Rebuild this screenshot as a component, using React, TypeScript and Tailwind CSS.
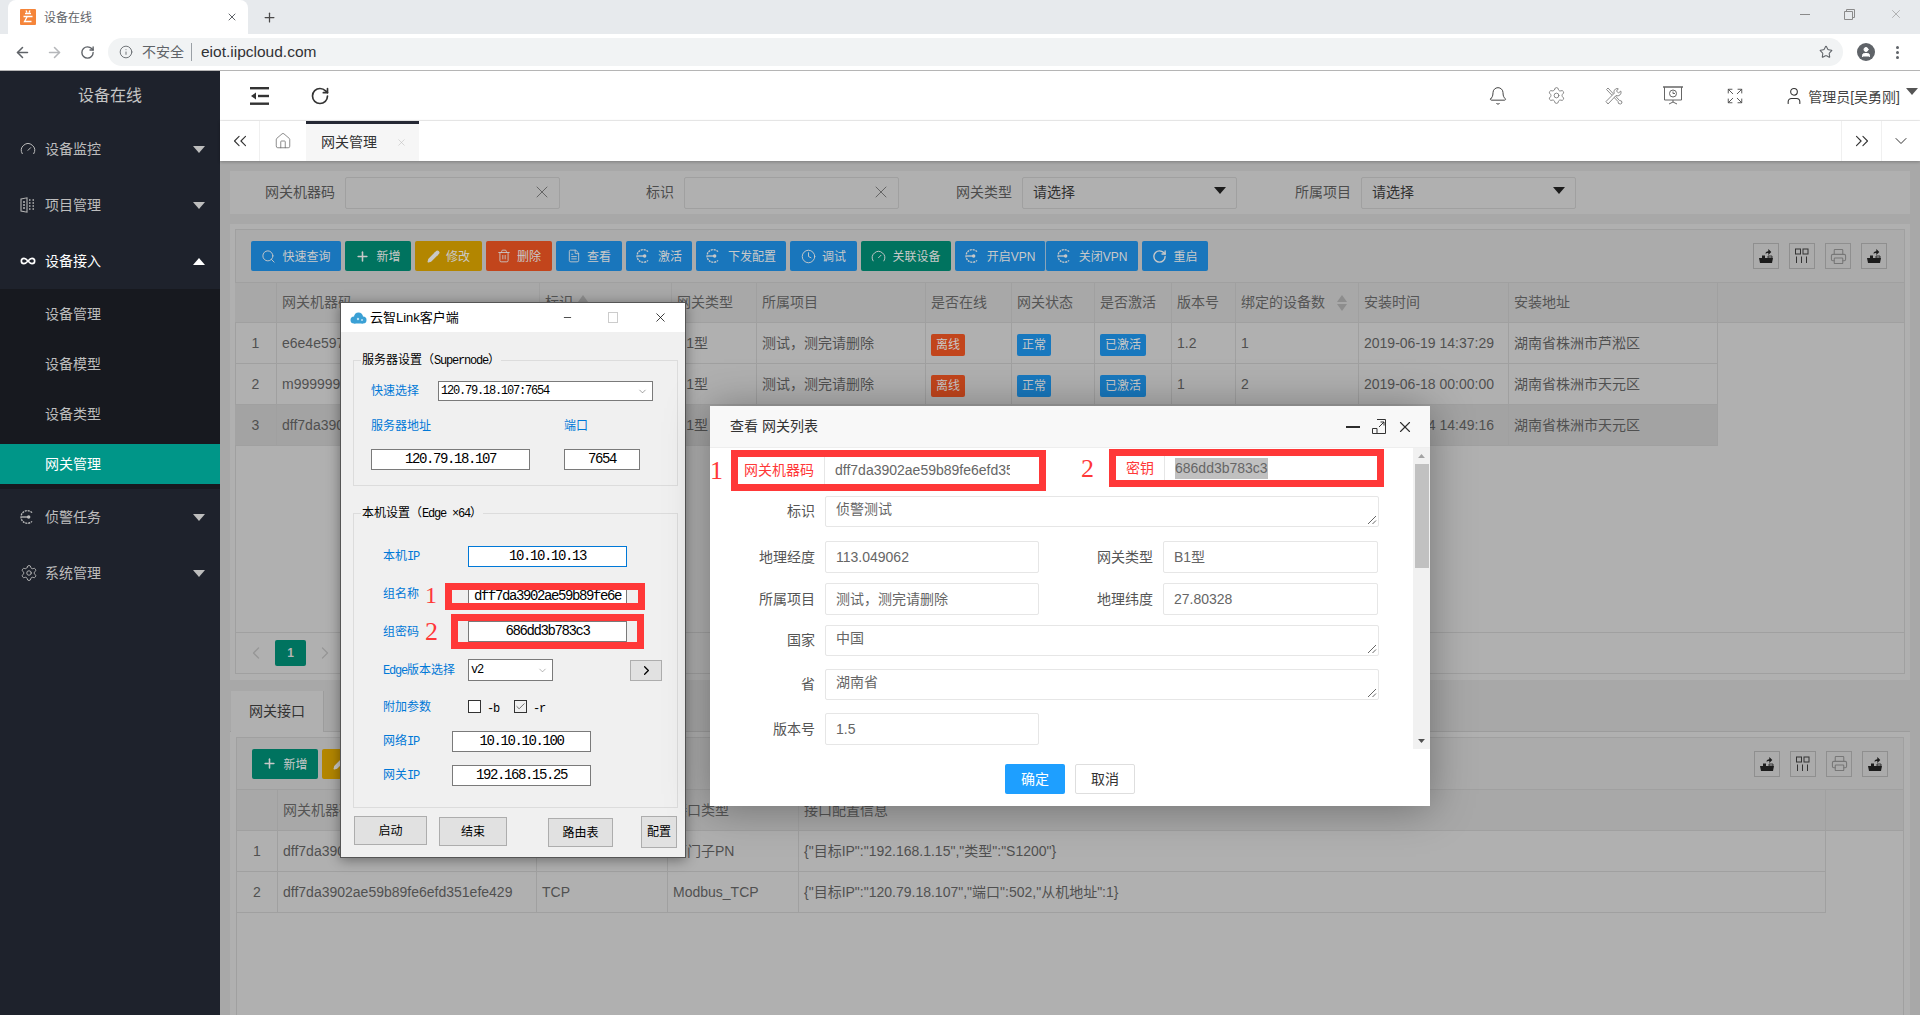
import React from "react";
import {
  ArrowLeft, ArrowRight, Bell, ChevronDown, ChevronLeft, ChevronRight, ChevronsLeft, ChevronsRight,
  Clock, Expand, FileText, Gauge, Home, Info, Infinity as InfinityIcon, Pencil, Plus, Printer, RotateCw, Search,
  Settings, Star, Trash2, User, X, Minus, Check,
} from "lucide-react";

const CDot = ({ s = 16, c = "currentColor" }: { s?: number; c?: string }) => (
  <svg width={s} height={s} viewBox="0 0 24 24" fill="none" stroke={c} strokeWidth="2" strokeDasharray="3 1.2">
    <path d="M18 5.5A9.5 9.5 0 1 0 18 18.5" />
    <path d="M2.5 12H12" strokeDasharray="none" />
    <circle cx="13" cy="12" r="1.6" fill={c} strokeDasharray="none" />
  </svg>
);
const Outdent = () => (
  <svg width="20" height="18" viewBox="0 0 20 18" fill="#333">
    <rect x="0" y="0" width="19" height="2.4" />
    <rect x="0" y="15.5" width="19" height="2.4" />
    <rect x="8" y="7.8" width="11" height="2.4" />
    <path d="M1 9l5-3.6v7.2z" />
  </svg>
);
const ShareTray = () => (
  <svg width="16" height="16" viewBox="0 0 16 16" fill="#1c1c1c">
    <path d="M1 10h14l-1 5H2z" />
    <path d="M4 10V7.5h3V10zM7.5 5.8c0-1.6 1-2.6 2.8-2.6V1l3 3-3 3V5c-1.3 0-2 .2-2.8.8z" />
    <path d="M10 8h4v2h-4z" fill="none" stroke="#1c1c1c" strokeWidth=".8" />
  </svg>
);
const ColIcon = () => (
  <svg width="16" height="16" viewBox="0 0 16 16" fill="none" stroke="#333" strokeWidth="1">
    <rect x="1.5" y="1" width="5" height="5" />
    <rect x="9" y="1" width="5" height="5" />
    <path d="M2.5 8.5V15M7.5 8.5V15M12.5 8.5V15" />
  </svg>
);
const Projector = () => (
  <svg width="20" height="20" viewBox="0 0 20 20" fill="none" stroke="#666" strokeWidth="1">
    <path d="M0 1h20" strokeWidth="1.5" />
    <path d="M1.5 1v13h17V1" />
    <circle cx="10" cy="7.5" r="3.5" />
    <path d="M10 5.5v2h2M10 14v2M10 16l-4 2M10 16l4 2" />
  </svg>
);
const Tools = () => (
  <svg width="18" height="18" viewBox="0 0 18 18" fill="none" stroke="#8a8a8a" strokeWidth="1">
    <path d="M1.5 2.5L3 1l11.5 12.5 2 .5.5 2-1.500 1-2-.5-.5-2z" />
    <path d="M12 1.500a3.500 3.500 0 0 0-2.800 4.800L1 14.500 3 17l8-8.500a3.500 3.500 0 0 0 4.800-4.500l-2.300 2-2-2 1.800-2.200z" fill="#fff" />
  </svg>
);
const ProjectIcon = () => (
  <svg width="15" height="16" viewBox="0 0 15 16" fill="none" stroke="#b5b5b5" strokeWidth="1.1">
    <path d="M1 2l6-1.200v14.400L1 14z" />
    <path d="M3 5h2M3 8h2M3 11h2M9 3h1.500M9 6h1.500M9 9h1.500M9 12h1.500M12.500 3H14M12.500 6H14M12.500 9H14M12.500 12H14" strokeWidth="1.5" />
  </svg>
);
const Cloud = () => (
  <svg width="17" height="12" viewBox="0 0 17 12" fill="#3aa0d5">
    <circle cx="4" cy="8" r="3.5" />
    <circle cx="8.5" cy="5" r="4.5" />
    <circle cx="13" cy="8" r="3.5" />
    <path d="M4 8h9v3.500H4z" />
    <circle cx="8" cy="7" r="1.2" fill="#bfe3f5" />
    <circle cx="12" cy="8" r="1" fill="#bfe3f5" />
  </svg>
);
const Favicon = () => (
  <svg width="16" height="16" viewBox="0 0 16 16">
    <rect width="16" height="16" rx="1" fill="#f5853a" />
    <path d="M5 4.500h6M3.500 7.500h9M7 8l-2.500 4.500h7M6 1.500l1 2M10 1.500l-1 2" stroke="#fff" strokeWidth="1.3" fill="none" />
  </svg>
);
const Caret = ({ up = false, cls = "" }: { up?: boolean; cls?: string }) => (
  <svg width="12" height="7" viewBox="0 0 12 7" className={cls} fill="currentColor">
    <path d={up ? "M6 0l6 7H0z" : "M0 0h12L6 7z"} />
  </svg>
);
const Sort = () => (
  <svg width="10" height="18" viewBox="0 0 10 18" fill="#8d8d8d">
    <path d="M5 1l5 7H0zM5 17l5-7H0z" />
  </svg>
);
const Resize = () => (
  <svg width="10" height="10" viewBox="0 0 10 10" className="absolute bottom-px right-px" stroke="#666" fill="none">
    <path d="M1 9l8-8M5.5 9L9 5.5" />
  </svg>
);

const SideItem = ({ icon, text, active = false, up = false }: { icon: React.ReactNode; text: string; active?: boolean; up?: boolean }) => (
  <div className={`flex h-[56px] items-center pl-[20px] pr-[15px] text-[14px] ${active ? "text-white" : "text-[#bdbdbd]"}`}>
    <span className="flex w-[25px] items-center">{icon}</span>
    <span className="flex-1">{text}</span>
    <Caret up={up} />
  </div>
);

const SubItem = ({ text, active = false }: { text: string; active?: boolean }) =>
  active ? (
    <div className="mt-[5px] flex h-[40px] items-center bg-[#009688] pl-[45px] text-[14px] text-white">{text}</div>
  ) : (
    <div className="flex h-[50px] items-center pl-[45px] text-[14px] text-[#bdbdbd]">{text}</div>
  );

const Btn = ({ w, bg, icon, text, flush = false }: { w: string; bg: string; icon: React.ReactNode; text: string; flush?: boolean }) => (
  <div className={`flex h-[30px] items-center justify-center gap-[6px] rounded-[2px] text-[12px] text-[#c9c9c9] ${w} ${bg} ${flush ? "-mr-[4px] border-r border-[#8aa5ba]" : ""}`}>
    {icon}
    <span className="pt-[2px]">{text}</span>
  </div>
);

const ToolIcons = () => (
  <div className="flex gap-[10px]">
    {[<ShareTray key="a" />, <ColIcon key="b" />, <Printer key="c" size={17} strokeWidth={1.5} color="#777" />, <ShareTray key="d" />].map((ic, i) => (
      <div key={i} className="flex h-[26px] w-[26px] items-center justify-center border border-[#8f8f8f]">{ic}</div>
    ))}
  </div>
);

const Badge = ({ text, cls }: { text: string; cls: string }) => (
  <span className={`mt-[3px] inline-flex h-[22px] items-center rounded-[2px] px-[5px] text-[12px] text-[#c9c9c9] ${cls}`}>{text}</span>
);

const cols1 = "grid w-[1483px] grid-cols-[42px_263px_132px_85px_169px_86px_83px_77px_64px_123px_150px_209px]";
const cols2 = "grid w-[1589px] grid-cols-[41px_259px_131px_131px_1027px]";
const cell = "flex items-center border-r border-[#a0a0a0] pl-[5px] overflow-hidden whitespace-nowrap";
const numCell = "flex items-center justify-center border-r border-[#a0a0a0]";

const off = <Badge text="离线" cls="bg-[#c2451c]" />;
const ok = <Badge text="正常" cls="bg-[#1878be]" />;
const act = <Badge text="已激活" cls="bg-[#1878be]" />;

const rows1 = [
  ["1", "e6e4e59702ae59b89fe6efd351efe4", "侦警测试", "B1型", "测试，测完请删除", off, ok, act, "1.2", "1", "2019-06-19 14:37:29", "湖南省株洲市芦淞区"],
  ["2", "m99999902ae59b89fe6efd351efe4", "侦警测试", "B1型", "测试，测完请删除", off, ok, act, "1", "2", "2019-06-18 00:00:00", "湖南省株洲市天元区"],
  ["3", "dff7da3902ae59b89fe6efd351efe4", "侦警测试", "B1型", "测试，测完请删除", off, ok, act, "1.5", "2", "2019-06-14 14:49:16", "湖南省株洲市天元区"],
];
const heads1: React.ReactNode[] = [
  "", "网关机器码",
  <span key="s" className="flex items-center gap-[5px]">标识 <Sort /></span>,
  "网关类型", "所属项目", "是否在线", "网关状态", "是否激活", "版本号",
  <span key="t" className="flex items-center gap-[12px]">绑定的设备数 <Sort /></span>,
  "安装时间", "安装地址",
];
const rows2 = [
  ["1", "dff7da3902ae59b89fe6efd351efe429", "TCP", "西门子PN", '{"目标IP":"192.168.1.15","类型":"S1200"}'],
  ["2", "dff7da3902ae59b89fe6efd351efe429", "TCP", "Modbus_TCP", '{"目标IP":"120.79.18.107","端口":502,"从机地址":1}'],
];

const Filter = ({ label, w, select = false }: { label: string; w: string; select?: boolean }) => (
  <div className={`flex items-center justify-end gap-[10px] ${w}`}>
    <span className="text-[14px] text-[#4c4c4c]">{label}</span>
    <div className={`flex h-[32px] w-[215px] items-center justify-between rounded-[2px] border border-[#a0a0a0] pl-[10px] text-[14px] text-[#303030] ${select ? "pr-[10px]" : "pr-[7px]"}`}>
      <span>{select ? "请选择" : ""}</span>
      {select ? <Caret cls="mb-[4px] text-[#1c1c1c]" /> : <X size={20} strokeWidth={1} color="#555" className="mb-[1px]" />}
    </div>
  </div>
);

const Win = "font-['Liberation_Mono','Noto_Sans_CJK_SC',monospace]";
const Mono12 = ({ children }: { children: React.ReactNode }) => (
  <span className={`${Win} text-[12px] tracking-[-1.2px]`}>{children}</span>
);
const Blue = ({ children, w }: { children: React.ReactNode; w: string }) => (
  <span className={`shrink-0 text-[12px] text-[#0078d7] ${w}`}>{children}</span>
);
const WInput = ({ value, w, cls = "border-[#7a7a7a]" }: { value: string; w: string; cls?: string }) => (
  <div className={`flex h-[21px] shrink-0 items-center justify-center overflow-hidden border bg-white text-[14px] tracking-[-1.4px] text-black ${Win} ${w} ${cls}`}>
    {value}
  </div>
);
const WBtn = ({ text, cls }: { text: string; cls: string }) => (
  <div className={`flex shrink-0 items-center justify-center border border-[#adadad] bg-[#e1e1e1] text-[12px] text-black ${cls}`}>{text}</div>
);
const Num = ({ n, cls }: { n: string; cls: string }) => (
  <span className={`font-['Liberation_Serif',serif] leading-none text-[#ff3838] ${cls}`}>{n}</span>
);
const WCheck = ({ on = false }: { on?: boolean }) => (
  <span className={`flex h-[13px] w-[13px] items-center justify-center border border-[#333] ${on ? "bg-[#f0f0f0]" : "bg-white"}`}>
    {on && <Check size={11} strokeWidth={1.5} color="#333" />}
  </span>
);

const ClientWindow = () => (
  <div className="absolute left-[340px] top-[302px] h-[556px] w-[346px] border border-[#555] bg-[#f0f0f0] shadow-[0_2px_12px_rgba(0,0,0,0.4)]">
    <div className="flex h-[29px] items-center bg-white pl-[9px] text-[13px] text-black">
      <Cloud />
      <span className="ml-[3px] flex-1">云智Link客户端</span>
      <Minus size={11} strokeWidth={1.5} className="mr-[35px]" color="#000" />
      <span className="mr-[35px] h-[11px] w-[10px] border border-[#ccc]" />
      <X size={15} strokeWidth={1.2} className="mr-[17px]" color="#000" />
    </div>

    <div className="relative ml-[12px] mt-[28px] h-[126px] w-[325px] border border-[#dcdcdc] pl-[17px] pt-[20px]">
      <div className="absolute -top-[10px] left-[7px] bg-[#f0f0f0] px-px text-[12px] text-black">
        服务器设置（<Mono12>Supernode</Mono12>）
      </div>
      <div className="flex items-center">
        <Blue w="w-[67px]">快速选择</Blue>
        <div className="flex h-[20px] w-[215px] items-center justify-between border border-[#7a7a7a] bg-white pl-[2px] pr-[4px] text-black">
          <Mono12>120.79.18.107:7654</Mono12>
          <ChevronDown size={11} strokeWidth={1.2} color="#555" />
        </div>
      </div>
      <div className="mt-[17px] flex h-[16px] items-center">
        <Blue w="w-[193px]">服务器地址</Blue>
        <Blue w="w-[40px]">端口</Blue>
      </div>
      <div className="mt-[15px] flex">
        <WInput value="120.79.18.107" w="w-[159px]" />
        <div className="w-[34px]" />
        <WInput value="7654" w="w-[76px]" />
      </div>
    </div>

    <div className="relative ml-[12px] mt-[27px] h-[295px] w-[325px] border border-[#dcdcdc] pl-[29px] pt-[32px]">
      <div className="absolute -top-[10px] left-[7px] bg-[#f0f0f0] px-px text-[12px] text-black">
        本机设置（<Mono12>Edge ×64</Mono12>）
      </div>
      <div className="flex items-center">
        <Blue w="w-[85px]">本机<Mono12>IP</Mono12></Blue>
        <WInput value="10.10.10.13" w="w-[159px]" cls="border-[#0078d7]" />
      </div>
      <div className="mt-[16px] flex h-[27px] items-start">
        <Blue w="w-[42px] mt-[2px]">组名称</Blue>
        <Num n="1" cls="w-[20px] text-[24px]" />
        <div className="h-[27px] w-[200px] shrink-0 border-[7px] border-[#ff3838] pl-[16px]">
          <div className="flex h-[13px] w-[159px] items-center justify-center overflow-hidden border-x border-[#7a7a7a] bg-white">
            <span className={`${Win} text-[14px] tracking-[-1.4px] text-black`}>dff7da3902ae59b89fe6e</span>
          </div>
        </div>
      </div>
      <div className="mt-[4px] flex h-[35px] items-center">
        <Blue w="w-[42px]">组密码</Blue>
        <Num n="2" cls="w-[26px] text-[26px]" />
        <div className="flex h-[35px] w-[193px] shrink-0 items-center border-[7px] border-[#ff3838] pl-[10px]">
          <WInput value="686dd3b783c3" w="w-[159px] h-[20px]" />
        </div>
      </div>
      <div className="mt-[10px] flex h-[22px] items-center">
        <Blue w="w-[85px]"><Mono12>Edge</Mono12>版本选择</Blue>
        <div className="flex h-[22px] w-[85px] items-center justify-between border border-[#7a7a7a] bg-white px-[2px] pr-[4px] text-black">
          <Mono12>v2</Mono12>
          <ChevronDown size={11} strokeWidth={1.2} color="#777" />
        </div>
        <div className="ml-[77px] flex h-[21px] w-[32px] items-center justify-center border border-[#adadad] bg-[#e1e1e1]">
          <ChevronRight size={15} strokeWidth={2} color="#000" />
        </div>
      </div>
      <div className="mt-[19px] flex h-[13px] items-center text-black">
        <Blue w="w-[85px]">附加参数</Blue>
        <WCheck />
        <span className="ml-[6px] w-[27px]"><Mono12>-b</Mono12></span>
        <WCheck on />
        <span className="ml-[6px]"><Mono12>-r</Mono12></span>
      </div>
      <div className="mt-[18px] flex items-center">
        <Blue w="w-[69px]">网络<Mono12>IP</Mono12></Blue>
        <WInput value="10.10.10.100" w="w-[139px]" />
      </div>
      <div className="mt-[13px] flex items-center">
        <Blue w="w-[69px]">网关<Mono12>IP</Mono12></Blue>
        <WInput value="192.168.15.25" w="w-[139px]" />
      </div>
    </div>

    <div className="mt-[8px] flex items-start">
      <WBtn text="启动" cls="ml-[13px] h-[29px] w-[73px]" />
      <WBtn text="结束" cls="ml-[12px] mt-px h-[29px] w-[68px]" />
      <WBtn text="路由表" cls="ml-[41px] mt-[2px] h-[29px] w-[65px]" />
      <WBtn text="配置" cls="ml-[28px] h-[32px] w-[36px]" />
    </div>
  </div>
);

const Lab = ({ children, w = "w-[105px]" }: { children: React.ReactNode; w?: string }) => (
  <span className={`shrink-0 text-right text-[14px] text-[#555] ${w}`}>{children}</span>
);
const MInput = ({ v, w }: { v: string; w: string }) => (
  <div className={`ml-[10px] flex h-[32px] items-center rounded-[2px] border border-[#e6e6e6] pl-[10px] text-[14px] text-[#666] ${w}`}>{v}</div>
);
const MArea = ({ v, cls }: { v: string; cls: string }) => (
  <div className={`flex items-center ${cls}`}>
    <Lab>{v === "侦警测试" ? "标识" : v === "中国" ? "国家" : "省"}</Lab>
    <div className="relative ml-[10px] h-[31px] w-[554px] rounded-[2px] border border-[#e6e6e6] pl-[10px] pt-[2px] text-[14px] text-[#666]">
      {v}
      <Resize />
    </div>
  </div>
);

const GatewayModal = () => (
  <div className="absolute left-[710px] top-[406px] flex h-[400px] w-[720px] flex-col bg-white shadow-[0_2px_40px_rgba(0,0,0,0.35)]">
    <div className="flex h-[42px] items-center border-b border-[#eeeeee] bg-[#f8f8f8] pl-[20px] pr-[16px] text-[14px] text-[#333]">
      <span className="flex-1">查看 网关列表</span>
      <span className="mr-[12px] h-[2px] w-[14px] bg-[#2d2d2d]" />
      <svg width="14" height="15" viewBox="0 0 14 15" fill="none" stroke="#333" className="mr-[10px]">
        <path d="M5 .5h8.500v14H5M.5 9.5h4.500v5H.5zM7 8l5-5M8.500 3H12v3.500" />
      </svg>
      <X size={18} strokeWidth={1.5} color="#2d2d2d" />
    </div>
    <div className="flex h-[301px] overflow-hidden">
      <div className="w-[703px]">
        <div className="flex h-[42px] items-start pt-[2px]">
          <Num n="1" cls="w-[21px] text-[26px] mt-[8px]" />
          <div className="flex h-[41px] w-[315px] shrink-0 items-center border-[7px] border-[#ff3838]">
            <span className="flex h-full w-[87px] items-center justify-end border-r border-[#e6e6e6] pr-[10px] text-[14px] text-[#ff3838]">网关机器码</span>
            <span className="w-[185px] overflow-hidden whitespace-nowrap pl-[10px] text-[14px] text-[#666]">dff7da3902ae59b89fe6efd351efe429</span>
          </div>
          <Num n="2" cls="ml-[35px] w-[28px] text-[26px] mt-[6px]" />
          <div className="-mt-[1px] flex h-[38px] w-[275px] shrink-0 items-center border-[7px] border-[#ff3838]">
            <span className="flex h-full w-[49px] items-center justify-end border-r border-[#e6e6e6] pr-[10px] text-[14px] text-[#ff3838]">密钥</span>
            <span className="ml-[10px] bg-[#c0c0c0] text-[14px] text-[#666]">686dd3b783c3</span>
          </div>
        </div>
        <MArea v="侦警测试" cls="mt-[6px]" />
        <div className="mt-[14px] flex items-center">
          <Lab>地理经度</Lab>
          <MInput v="113.049062" w="w-[214px]" />
          <Lab w="w-[114px]">网关类型</Lab>
          <MInput v="B1型" w="w-[215px]" />
        </div>
        <div className="mt-[10px] flex items-center">
          <Lab>所属项目</Lab>
          <MInput v="测试，测完请删除" w="w-[214px]" />
          <Lab w="w-[114px]">地理纬度</Lab>
          <MInput v="27.80328" w="w-[215px]" />
        </div>
        <MArea v="中国" cls="mt-[10px]" />
        <MArea v="湖南省" cls="mt-[13px]" />
        <div className="mt-[13px] flex items-center">
          <Lab>版本号</Lab>
          <MInput v="1.5" w="w-[214px]" />
        </div>
      </div>
      <div className="flex w-[17px] flex-col items-center bg-[#f1f1f1]">
        <Caret up cls="mt-[6px] h-[4px] w-[7px] text-[#a3a3a3]" />
        <div className="mt-[6px] h-[104px] w-[14px] bg-[#c1c1c1]" />
        <div className="flex-1" />
        <Caret cls="mb-[6px] h-[4px] w-[7px] text-[#505050]" />
      </div>
    </div>
    <div className="mt-[15px] flex justify-center gap-[10px]">
      <div className="flex h-[30px] w-[60px] items-center justify-center rounded-[2px] bg-[#1e9fff] text-[14px] text-white">确定</div>
      <div className="flex h-[30px] w-[60px] items-center justify-center rounded-[2px] border border-[#dedede] text-[14px] text-[#333]">取消</div>
    </div>
  </div>
);

export default function App() {
  return (
    <div className="relative flex h-[1015px] w-[1920px] flex-col overflow-hidden bg-white font-['Liberation_Sans','Noto_Sans_CJK_SC',sans-serif]">
      {/* browser tab strip */}
      <div className="flex h-[34px] items-end bg-[#e7eaed] pl-[8px]">
        <div className="flex h-[34px] w-[240px] items-center rounded-t-[8px] bg-white pl-[12px] pr-[10px]">
          <Favicon />
          <span className="ml-[8px] flex-1 pt-[2px] text-[12px] text-[#5f6368]">设备在线</span>
          <X size={12} strokeWidth={2} color="#5f6368" />
        </div>
        <Plus size={15} strokeWidth={2} color="#4a4a4a" className="mb-[9px] ml-[14px]" />
        <div className="flex-1" />
        <div className="mb-[13px] mr-[17px] flex items-center gap-[34px]">
          <span className="h-px w-[10px] bg-[#8a8a8a]" />
          <svg width="11" height="11" viewBox="0 0 11 11" fill="none" stroke="#8a8a8a"><path d="M.5 2.500h8v8h-8zM2.500 2.500v-2h8v8h-2" /></svg>
          <X size={14} strokeWidth={1} color="#8a8a8a" />
        </div>
      </div>
      {/* browser toolbar */}
      <div className="flex h-[37px] items-center border-b border-[#b5b5b5] bg-white py-[4px]">
        <ArrowLeft size={17} strokeWidth={2.2} color="#5f6368" className="ml-[14px]" />
        <ArrowRight size={17} strokeWidth={2.2} color="#b5b7ba" className="ml-[15px]" />
        <RotateCw size={15} strokeWidth={2.2} color="#5f6368" className="ml-[17px]" />
        <div className="ml-[13px] flex h-[28px] w-[1735px] items-center rounded-full bg-[#f1f3f4] pl-[11px] pr-[10px]">
          <Info size={14} strokeWidth={1.5} color="#5f6368" />
          <span className="ml-[9px] text-[14px] text-[#5f6368]">不安全</span>
          <span className="ml-[7px] h-[18px] w-px bg-[#9aa0a6]" />
          <span className="ml-[9px] flex-1 text-[15.5px] text-[#303134]">eiot.iipcloud.com</span>
          <Star size={14} strokeWidth={1.8} color="#5f6368" />
        </div>
        <span className="ml-[14px] flex h-[18px] w-[18px] items-center justify-center rounded-full bg-[#5f6368]">
          <User size={12} fill="#fff" color="#fff" />
        </span>
        <span className="ml-[21px] flex flex-col gap-[2px]">
          <i className="h-[3px] w-[3px] rounded-full bg-[#5f6368]" />
          <i className="h-[3px] w-[3px] rounded-full bg-[#5f6368]" />
          <i className="h-[3px] w-[3px] rounded-full bg-[#5f6368]" />
        </span>
      </div>

      <div className="flex min-h-0 flex-1">
        {/* sidebar */}
        <aside className="w-[220px] shrink-0 bg-[#1e222c]">
          <div className="flex h-[50px] items-center justify-center text-[16px] text-[#c4c4c4]">设备在线</div>
          <SideItem icon={<Gauge size={16} strokeWidth={1.5} />} text="设备监控" />
          <SideItem icon={<ProjectIcon />} text="项目管理" />
          <SideItem icon={<InfinityIcon size={16} strokeWidth={2.5} />} text="设备接入" active up />
          <div className="h-[200px] bg-[#17191f]">
            <SubItem text="设备管理" />
            <SubItem text="设备模型" />
            <SubItem text="设备类型" />
            <SubItem text="网关管理" active />
          </div>
          <SideItem icon={<CDot />} text="侦警任务" />
          <SideItem icon={<Settings size={18} strokeWidth={1.2} />} text="系统管理" />
        </aside>

        <main className="flex min-w-0 flex-1 flex-col">
          {/* header */}
          <div className="flex h-[50px] items-center border-b border-[#f0f0f0] bg-white">
            <span className="ml-[30px]"><Outdent /></span>
            <RotateCw size={20} strokeWidth={2} color="#333" className="ml-[40px]" />
            <div className="flex-1" />
            <Bell size={20} strokeWidth={1.2} color="#444" />
            <Settings size={19} strokeWidth={1.1} color="#777" className="ml-[39px]" />
            <span className="ml-[39px]"><Tools /></span>
            <span className="ml-[40px]"><Projector /></span>
            <Expand size={18} strokeWidth={1.3} color="#555" className="ml-[43px]" />
            <User size={20} strokeWidth={1.3} color="#333" className="ml-[40px]" />
            <span className="ml-[4px] mt-[4px] text-[14px] text-[#444]">管理员[吴勇刚]</span>
            <Caret cls="ml-[6px] mb-[8px] mr-[2px] text-[#555]" />
          </div>
          {/* tabs */}
          <div className="z-10 flex h-[40px] items-stretch bg-white shadow-[0_1px_3px_rgba(0,0,0,0.25)]">
            <div className="flex w-[40px] items-center justify-center border-r border-[#f0f0f0]">
              <ChevronsLeft size={22} strokeWidth={1.2} color="#333" />
            </div>
            <div className="flex w-[46px] items-center justify-center">
              <Home size={18} strokeWidth={1} color="#666" />
            </div>
            <div className="flex w-[113px] items-center border-t-[3px] border-[#252834] bg-[#f6f6f6] pl-[15px] text-[14px] text-[#333]">
              <span className="flex-1">网关管理</span>
              <X size={11} strokeWidth={1.2} color="#bbb" className="mr-[12px]" />
            </div>
            <div className="flex-1" />
            <div className="flex w-[40px] items-center justify-center border-l border-[#f0f0f0]">
              <ChevronsRight size={22} strokeWidth={1.2} color="#333" />
            </div>
            <div className="flex w-[39px] items-center justify-center border-l border-[#f0f0f0]">
              <ChevronDown size={20} strokeWidth={1.2} color="#333" />
            </div>
          </div>

          {/* dimmed content */}
          <div className="flex min-h-0 flex-1 flex-col bg-[#a8a8a8] pl-[10px] pr-[10px] pt-[10px]">
            <div className="flex h-[43px] shrink-0 items-center bg-[#b0b0b0]">
              <Filter label="网关机器码" w="w-[330px]" />
              <Filter label="标识" w="w-[339px]" />
              <Filter label="网关类型" w="w-[338px]" select />
              <Filter label="所属项目" w="w-[339px]" select />
            </div>

            <div className="mt-[10px] h-[456px] shrink-0 bg-[#b0b0b0] pb-[6px] pl-[5px] pr-[5px] pt-[5px]">
              <div className="flex h-full flex-col border border-[#a0a0a0]">
                <div className="flex h-[52px] shrink-0 items-center justify-between bg-[#ababab] pl-[15px] pr-[17px]">
                  <div className="flex gap-[4px]">
                    <Btn w="w-[90px]" bg="bg-[#1976bc]" icon={<Search size={15} strokeWidth={1.5} />} text="快速查询" />
                    <Btn w="w-[66px]" bg="bg-[#00735f]" icon={<Plus size={15} strokeWidth={2.5} />} text="新增" />
                    <Btn w="w-[67px]" bg="bg-[#b38600]" icon={<Pencil size={13} fill="currentColor" />} text="修改" />
                    <Btn w="w-[66px]" bg="bg-[#c2451c]" icon={<Trash2 size={14} strokeWidth={1.5} />} text="删除" />
                    <Btn w="w-[66px]" bg="bg-[#1976bc]" icon={<FileText size={14} strokeWidth={1.5} />} text="查看" />
                    <Btn w="w-[66px]" bg="bg-[#1976bc]" icon={<CDot />} text="激活" />
                    <Btn w="w-[90px]" bg="bg-[#1976bc]" icon={<CDot />} text="下发配置" />
                    <Btn w="w-[67px]" bg="bg-[#1976bc]" icon={<Clock size={15} strokeWidth={1.5} />} text="调试" />
                    <Btn w="w-[90px]" bg="bg-[#00735f]" icon={<Gauge size={15} strokeWidth={1.5} />} text="关联设备" />
                    <Btn w="w-[91px]" bg="bg-[#1976bc]" icon={<CDot />} text="开启VPN" flush />
                    <Btn w="w-[92px]" bg="bg-[#1976bc]" icon={<CDot />} text="关闭VPN" />
                    <Btn w="w-[66px]" bg="bg-[#1976bc]" icon={<RotateCw size={15} strokeWidth={2.2} />} text="重启" />
                  </div>
                  <ToolIcons />
                </div>
                <div className="-ml-px h-[41px] shrink-0 border-y border-[#a0a0a0] bg-[#a8a8a8]">
                  <div className={`${cols1} h-full text-[14px] text-[#555]`}>
                    {heads1.map((h, i) => (
                      <div key={i} className={cell}>{h}</div>
                    ))}
                  </div>
                </div>
                {rows1.map((r, i) => (
                  <div key={i} className={`${cols1} -ml-px h-[41px] shrink-0 border-b border-[#a0a0a0] text-[14px] text-[#505050] ${i === 2 ? "bg-[#a3a3a3]" : ""}`}>
                    {r.map((c, j) => (
                      <div key={j} className={j === 0 ? numCell : cell}>{c}</div>
                    ))}
                  </div>
                ))}
                <div className="flex-1" />
                <div className="flex h-[41px] shrink-0 items-center border-t border-[#a0a0a0] pl-[10px]">
                  <ChevronLeft size={20} strokeWidth={1.5} color="#969696" />
                  <span className="ml-[9px] flex h-[26px] w-[31px] items-center justify-center rounded-[2px] bg-[#00735f] text-[12px] font-bold text-[#b5b5b5]">1</span>
                  <ChevronRight size={20} strokeWidth={1.5} color="#969696" className="ml-[9px]" />
                </div>
              </div>
            </div>

            {/* bottom tabs */}
            <div className="mt-[11px] flex min-h-0 flex-1 flex-col">
              <div className="flex h-[41px] shrink-0 border-b border-[#9c9c9c]">
                <div className="-mb-px ml-px flex w-[93px] items-center justify-center border-r border-[#9c9c9c] bg-[#b0b0b0] text-[14px] text-[#333]">网关接口</div>
              </div>
              <div className="min-h-0 flex-1 bg-[#b0b0b0] pl-[6px] pr-[6px] pt-[5px]">
                <div className="flex h-full flex-col border border-b-0 border-[#a0a0a0]">
                  <div className="flex h-[51px] shrink-0 items-center justify-between bg-[#ababab] pl-[15px] pr-[15px]">
                    <div className="flex gap-[4px]">
                      <Btn w="w-[66px]" bg="bg-[#00735f]" icon={<Plus size={15} strokeWidth={2.5} />} text="新增" />
                      <Btn w="w-[66px]" bg="bg-[#b38600]" icon={<Pencil size={13} fill="currentColor" />} text="修改" />
                    </div>
                    <ToolIcons />
                  </div>
                  <div className="h-[42px] shrink-0 border-y border-[#a0a0a0] bg-[#a8a8a8]">
                    <div className={`${cols2} h-full text-[14px] text-[#555]`}>
                      {["", "网关机器码", "接口协议", "接口类型", "接口配置信息"].map((h, i) => (
                        <div key={i} className={cell}>{h}</div>
                      ))}
                    </div>
                  </div>
                  {rows2.map((r, i) => (
                    <div key={i} className={`${cols2} h-[41px] shrink-0 text-[14px] text-[#505050]`}>
                      {r.map((c, j) => (
                        <div key={j} className={`${j === 0 ? numCell : cell} border-b`}>{c}</div>
                      ))}
                    </div>
                  ))}
                </div>
              </div>
            </div>
          </div>
        </main>
      </div>

      <ClientWindow />
      <GatewayModal />
    </div>
  );
}
